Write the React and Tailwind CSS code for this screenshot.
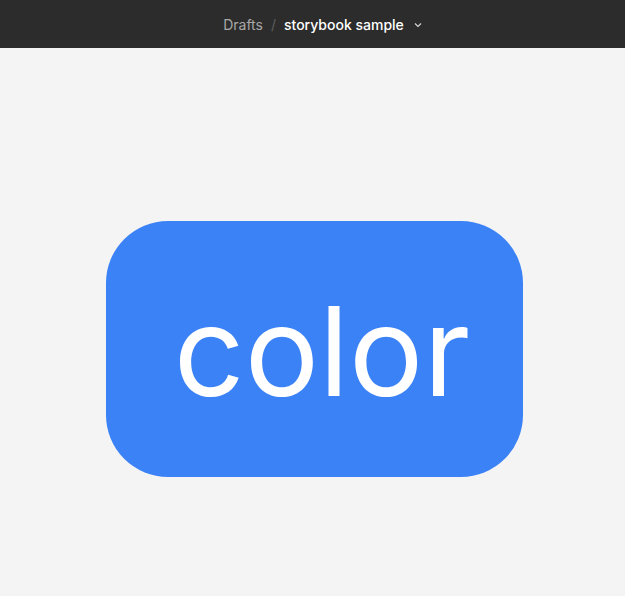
export default function App() {
  return (
    <div className="min-h-screen bg-[#f4f4f4] flex flex-col" style={{ fontFamily: "Inter, 'Noto Sans', sans-serif" }}>
      {/* Top bar */}
      <div className="h-12 bg-[#2c2c2c] flex items-center justify-center text-[14px] pl-[20px]">
        <span className="text-[#a8a8a8]">Drafts</span>
        <span className="text-[#5e5e5e] mx-[8px]">/</span>
        <span className="text-white font-medium">storybook sample</span>
        <svg className="ml-[10px] mt-[1px]" width="8" height="8" viewBox="0 0 8 8" fill="none">
          <path d="M1 2.5l3 3 3-3" stroke="#d8d8d8" strokeWidth="1.1" />
        </svg>
      </div>

      {/* Canvas */}
      <div className="flex-1 flex justify-center pt-[173px] pl-[4px]">
        <div className="w-[417px] h-[256px] rounded-[62px] bg-[#3b82f6] flex items-center justify-center">
          <span className="text-white text-[124px] leading-none pl-[15px] mt-[4px]">color</span>
        </div>
      </div>
    </div>
  );
}
